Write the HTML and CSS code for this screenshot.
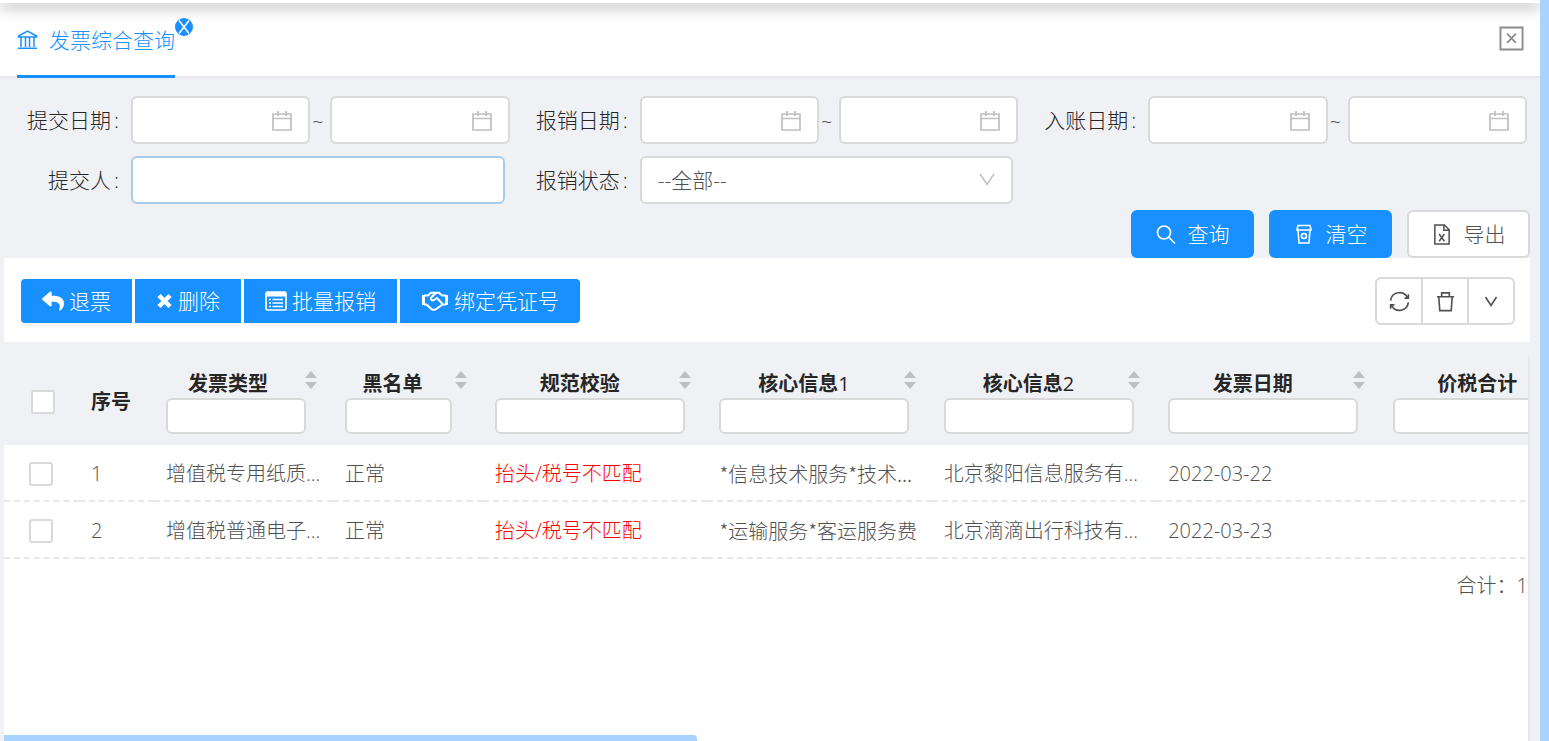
FILE: index.html
```html
<!DOCTYPE html>
<html lang="zh-CN">
<head>
<meta charset="utf-8">
<title>发票综合查询</title>
<link rel="stylesheet" href="styles.css">
</head>
<body>
<svg class="defs" aria-hidden="true">
  <symbol id="calendar" viewBox="0 0 20 20"><path d="M1 3h18v16H1zM1 7.500h18M6 0v5M14 0v5" fill="none" stroke="currentColor" stroke-width="1.700"/></symbol>
  <symbol id="down" viewBox="0 0 16 16"><path d="M1 2l7 10.500L15 2" fill="none" stroke="currentColor" stroke-width="1.500"/></symbol>
  <symbol id="sort" viewBox="0 0 12 20"><path d="M6 1l6 7H0zM6 19l6-7H0z" fill="currentColor"/></symbol>
</svg>
<div class="app">
  <main class="page">
    <div class="topbar"></div>
    <header class="tabs">
      <a class="tab" href="#">
        <svg class="bank" viewBox="0 0 20 20"><path d="M1 7V6l9-5 9 5v1zM3.500 7v10M8 7v10M12 7v10M16.500 7v10M0.500 18.200h19" fill="none" stroke="currentColor" stroke-width="1.500"/></svg>
        <span>发票综合查询</span>
        <svg class="tab-close" viewBox="0 0 18 18"><circle cx="9" cy="9" r="9" fill="#1890ff"/><path d="M4 2.500l10 13M14 2.500l-10 13" stroke="#fff" stroke-width="1.600"/></svg>
      </a>
      <button class="close-all" aria-label="关闭"><svg viewBox="0 0 26 26"><path d="M1.500 1.500h23v23h-23z" fill="none" stroke="#8c8c8c" stroke-width="2"/><path d="M8.500 8l9 9.500M17.500 8l-9 9.500" stroke="#8c8c8c" stroke-width="1.800"/></svg></button>
    </header>

    <form class="search">
      <div class="field">
        <label for="submit-from">提交日期<i>:</i></label>
        <div class="range">
          <span class="date"><input id="submit-from" type="text"><svg><use href="#calendar"/></svg></span>
          <span class="tilde">~</span>
          <span class="date"><input type="text" aria-label="提交日期止"><svg><use href="#calendar"/></svg></span>
        </div>
      </div>
      <div class="field">
        <label for="claim-from">报销日期<i>:</i></label>
        <div class="range">
          <span class="date"><input id="claim-from" type="text"><svg><use href="#calendar"/></svg></span>
          <span class="tilde">~</span>
          <span class="date"><input type="text" aria-label="报销日期止"><svg><use href="#calendar"/></svg></span>
        </div>
      </div>
      <div class="field">
        <label for="book-from">入账日期<i>:</i></label>
        <div class="range">
          <span class="date"><input id="book-from" type="text"><svg><use href="#calendar"/></svg></span>
          <span class="tilde">~</span>
          <span class="date"><input type="text" aria-label="入账日期止"><svg><use href="#calendar"/></svg></span>
        </div>
      </div>
      <div class="field">
        <label for="submitter">提交人<i>:</i></label>
        <div class="single"><input id="submitter" class="active" type="text"></div>
      </div>
      <div class="field">
        <label for="status">报销状态<i>:</i></label>
        <div class="single"><select id="status"><option>--全部--</option></select><svg><use href="#down"/></svg></div>
      </div>
    </form>

    <div class="actions">
      <button class="btn primary"><svg viewBox="0 0 20 20"><path d="M13 13l6 6M14.500 8a6.500 6.500 0 1 1-13 0a6.500 6.500 0 1 1 13 0" fill="none" stroke="currentColor" stroke-width="1.700"/></svg><span>查询</span></button>
      <button class="btn primary"><svg viewBox="0 0 20 20"><path d="M4 1h12l1 4.500H3zM4 5.500L5 18.500h10l1-13" fill="none" stroke="currentColor" stroke-width="1.600"/><circle cx="10" cy="11.500" r="2.500" fill="none" stroke="currentColor" stroke-width="1.600"/></svg><span>清空</span></button>
      <button class="btn"><svg viewBox="0 0 20 22"><path d="M2.500 1h10l5 5v15h-15zM12 1v5.500h5.500M7 10.500l5.500 7.500M12.500 10.500L7 18" fill="none" stroke="currentColor" stroke-width="1.600"/></svg><span>导出</span></button>
    </div>

    <section class="toolbar">
      <div class="ops">
        <button><svg width="22" height="22" viewBox="0 0 512 512"><path fill="currentColor" d="M8.309 189.836L184.313 37.851C199.719 24.546 224 35.347 224 56.015v80.053c160.629 1.839 288 34.032 288 186.258 0 61.441-39.581 122.309-83.333 154.132-13.653 9.931-33.111-2.533-28.077-18.631 45.344-145.012-21.507-183.510-176.590-185.742V360c0 20.700-24.300 31.453-39.687 18.164l-176.004-152c-11.071-9.562-11.086-26.753 0-36.328z"/></svg>退票</button>
        <button><svg width="17" height="16" viewBox="0 0 16 16"><path d="M2.500 2.500l11 11M13.500 2.500l-11 11" stroke="currentColor" stroke-width="4.500"/></svg>删除</button>
        <button><svg width="22" height="20" viewBox="0 0 22 20"><rect x="1" y="1" width="20" height="18" rx="1.500" fill="none" stroke="currentColor" stroke-width="1.700"/><path d="M1 3.300h20" stroke="currentColor" stroke-width="4.500"/><path d="M4 8.500h2M4 12h2M4 15.500h2M7.500 8.500H18M7.500 12H18M7.500 15.500H18" stroke="currentColor" stroke-width="1.500"/></svg>批量报销</button>
        <button><svg width="28" height="20" viewBox="0 0 26 20"><path d="M1.500 4v10M24.500 4v10" stroke="currentColor" stroke-width="3"/><path d="M2 4.500h4l3-2.700h3.500l2 1.200M2 13.500h2.500l5.500 5c2 .7 3.500.2 5-1l5.500-4H24M24 4.500h-4l-3-2.700h-3l-5 5c-.6 2 1 3.200 3 2.200l3-2 5.500 6" fill="none" stroke="currentColor" stroke-width="2"/></svg>绑定凭证号</button>
      </div>
      <div class="tools">
        <button aria-label="刷新"><svg viewBox="0 0 22 22"><path d="M1.700 10a9.300 9.300 0 0 1 17.600-3M20.300 12a9.300 9.300 0 0 1-17.600 3M20.300 3.500v4h-4M1.700 18.500v-4h4" fill="none" stroke="currentColor" stroke-width="1.700"/></svg></button>
        <button aria-label="删除"><svg viewBox="0 0 22 22"><path d="M2 6h18M4 6l1 14.500h12L18 6M7 6V2h8v4" fill="none" stroke="currentColor" stroke-width="1.700"/></svg></button>
        <button aria-label="更多"><svg class="small" viewBox="0 0 16 16"><path d="M2.500 4l5.500 8.500L13.500 4" fill="none" stroke="currentColor" stroke-width="1.600"/></svg></button>
      </div>
    </section>

    <section class="panel">
      <table>
        <colgroup><col class="c-check"><col class="c-check"><col class="c-type"><col class="c-black"><col class="c-wide"><col class="c-wide"><col class="c-wide"><col class="c-wide"><col class="c-wide"></colgroup>
        <thead>
          <tr>
            <th class="check"><input type="checkbox" aria-label="全选"></th>
            <th>序号</th>
            <th><div class="title"><span>发票类型</span><svg><use href="#sort"/></svg></div><input class="filter w-type" type="text" aria-label="发票类型"></th>
            <th><div class="title"><span>黑名单</span><svg><use href="#sort"/></svg></div><input class="filter w-black" type="text" aria-label="黑名单"></th>
            <th><div class="title"><span>规范校验</span><svg><use href="#sort"/></svg></div><input class="filter" type="text" aria-label="规范校验"></th>
            <th><div class="title"><span>核心信息<b>1</b></span><svg><use href="#sort"/></svg></div><input class="filter" type="text" aria-label="核心信息1"></th>
            <th><div class="title"><span>核心信息<b>2</b></span><svg><use href="#sort"/></svg></div><input class="filter" type="text" aria-label="核心信息2"></th>
            <th><div class="title"><span>发票日期</span><svg><use href="#sort"/></svg></div><input class="filter" type="text" aria-label="发票日期"></th>
            <th><div class="title"><span>价税合计</span><svg><use href="#sort"/></svg></div><input class="filter" type="text" aria-label="价税合计"></th>
          </tr>
        </thead>
        <tbody>
          <tr><td class="check"><input type="checkbox" aria-label="选择第1行"></td><td>1</td><td>增值税专用纸质...</td><td>正常</td><td class="error">抬头/税号不匹配</td><td class="goods">*信息技术服务*技术...</td><td>北京黎阳信息服务有...</td><td>2022-03-22</td><td></td></tr>
          <tr><td class="check"><input type="checkbox" aria-label="选择第2行"></td><td>2</td><td>增值税普通电子...</td><td>正常</td><td class="error">抬头/税号不匹配</td><td class="goods">*运输服务*客运服务费</td><td>北京滴滴出行科技有...</td><td>2022-03-23</td><td></td></tr>
        </tbody>
      </table>
      <div class="total">合计：1</div>
      <div class="hscroll"></div>
    </section>
  </main>
  <div class="vscroll"></div>
</div>
</body>
</html>
```
FILE: styles.css
```css
* { box-sizing: border-box; }
body {
  margin: 0;
  overflow: hidden;
  background: #f0f1f5;
  color: #505050;
  font: 300 20px/30px "Open Sans", "Noto Sans CJK SC", sans-serif;
}
button, input, select { font: inherit; color: inherit; margin: 0; }
svg { display: block; flex: none; }
.defs { display: none; }
.app { display: flex; height: 100vh; }
.page { flex: 1; min-width: 0; display: flex; flex-direction: column; }
.vscroll { width: 9px; background: #a8d3ff; }

.topbar {
  position: relative;
  height: 3px;
  flex: none;
  background: #fff;
  box-shadow: 0 3px 14px rgba(0, 0, 0, .7);
  clip-path: inset(0 0 -20px 0);
}
.tabs {
  display: flex;
  justify-content: space-between;
  height: 75px;
  flex: none;
  padding: 0 16px 0 17px;
  background: #fff;
  border-bottom: 2px solid #e8e8e8;
}
.tab {
  position: relative;
  display: flex;
  align-items: center;
  gap: 11px;
  height: 75px;
  padding-top: 2px;
  border-bottom: 3px solid #1890ff;
  color: #1890ff;
  font-size: 21px;
  text-decoration: none;
}
.bank { width: 21px; height: 20px; }
.tab-close { position: absolute; top: 15px; right: -18px; width: 18px; height: 18px; }
.close-all { align-self: center; padding: 0 0 2px; border: 0; background: none; }
.close-all svg { width: 25px; height: 25px; }

.search {
  display: grid;
  grid-template-columns: repeat(3, 1fr);
  row-gap: 12px;
  flex: none;
  padding: 18px 10px 6px 4px;
}
.field { display: flex; align-items: center; height: 48px; }
.field label {
  width: 127px;
  flex: none;
  padding-right: 12px;
  text-align: right;
  font-size: 21px;
  color: #262626;
}
.field i { padding-left: 3px; font-style: normal; }
.range { display: flex; flex: 1; min-width: 0; padding-right: 3px; }
.date { position: relative; flex: 1; min-width: 0; }
.tilde { width: 20px; height: 48px; flex: none; padding: 11px 0 0 2px; }
.single { position: relative; flex: 1; min-width: 0; padding-right: 8px; }
.field input, .field select {
  display: block;
  width: 100%;
  height: 48px;
  padding: 0 16px;
  border: 2px solid #d9d9d9;
  border-radius: 6px;
  outline: 0;
  background: #fff;
  font-size: 21px;
  appearance: none;
}
.field .active { border-color: #a9cbe8; }
.date svg {
  position: absolute;
  top: 15px;
  right: 18px;
  width: 20px;
  height: 20px;
  color: #bfbfbf;
}
.single svg {
  position: absolute;
  top: 16px;
  right: 26px;
  width: 16px;
  height: 16px;
  color: #bfbfbf;
}

.actions {
  display: flex;
  justify-content: flex-end;
  gap: 15px;
  flex: none;
  padding-right: 10px;
}
.btn {
  display: flex;
  align-items: center;
  justify-content: center;
  gap: 12px;
  width: 123px;
  height: 48px;
  padding: 0;
  border: 2px solid #d9d9d9;
  border-radius: 6px;
  background: #fff;
  font-size: 21px;
}
.btn svg { width: 20px; height: 21px; }
.primary { border-color: #1890ff; background: #1890ff; color: #fff; }

.toolbar {
  display: flex;
  align-items: center;
  justify-content: space-between;
  height: 84px;
  flex: none;
  margin: 0 10px 14px 4px;
  padding: 2px 15px 0 17px;
  background: #fff;
}
.ops { display: flex; gap: 3px; }
.ops button {
  display: flex;
  align-items: center;
  gap: 5px;
  height: 44px;
  padding: 0 21px;
  border: 0;
  background: #1890ff;
  box-shadow: 0 4px 2px rgba(0, 0, 0, .04);
  color: #fff;
  font-size: 21px;
}
.ops button:first-child { border-radius: 4px 0 0 4px; }
.ops button:last-child { border-radius: 0 4px 4px 0; }
.tools {
  display: flex;
  width: 140px;
  height: 48px;
  border: 2px solid #d9d9d9;
  border-radius: 6px;
}
.tools button {
  display: grid;
  place-items: center;
  flex: 1;
  padding: 0;
  border: 0;
  background: none;
}
.tools button + button { border-left: 2px solid #d9d9d9; }
.tools svg { width: 21px; height: 21px; }
.tools .small { width: 16px; height: 16px; }

.panel {
  display: flex;
  flex-direction: column;
  flex: 1;
  min-height: 0;
  margin: 0 10px 0 4px;
  overflow: hidden;
  border-right: 2px solid #e8e8e8;
  background: #fff;
}
table { width: 1601px; flex: none; table-layout: fixed; border-spacing: 0; }
.c-check { width: 75px; }
.c-type { width: 179px; }
.c-black { width: 150px; }
th {
  height: 89px;
  padding: 2px 12px 0;
  background: #f0f1f5;
  color: #262626;
  font-weight: 700;
  text-align: left;
}
.title {
  display: flex;
  align-items: center;
  gap: 15px;
  height: 28px;
  padding-right: 4px;
}
.title span { flex: 1; text-align: center; white-space: nowrap; }
.title b { font-weight: 400; }
.title svg {
  align-self: flex-start;
  width: 12px;
  height: 20px;
  color: #bfbfbf;
}
.filter {
  display: block;
  width: 190px;
  height: 36px;
  border: 2px solid #d9d9d9;
  border-radius: 6px;
  background: #fff;
}
.w-type { width: 140px; }
.w-black { width: 107px; }
td {
  height: 57px;
  padding: 2px 12px 0;
  border-bottom: 2px dashed #e8e8e8;
  white-space: nowrap;
}
.error { color: #f00; }
.goods { font-family: "Noto Sans CJK SC", sans-serif; }
th.check { padding-left: 27px; }
td.check { padding-left: 25px; }
input[type="checkbox"] {
  display: block;
  width: 24px;
  height: 24px;
  border: 2px solid #d9d9d9;
  border-radius: 3px;
  background: #fff;
  appearance: none;
}
.total { padding: 12px 0; text-align: right; }
.hscroll {
  width: 45.5%;
  height: 6px;
  margin-top: auto;
  border-radius: 0 4px 0 0;
  background: #a8d3ff;
}
```
